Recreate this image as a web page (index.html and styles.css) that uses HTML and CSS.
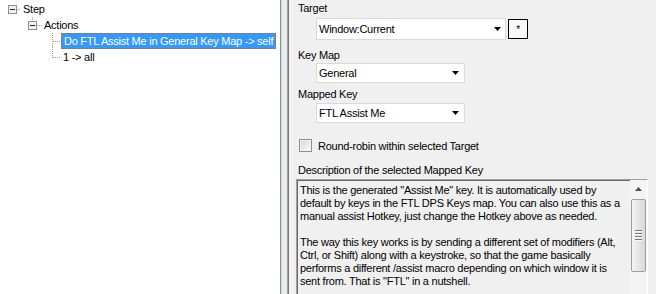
FILE: index.html
```html
<!DOCTYPE html>
<html lang="en">
<head>
    <meta charset="UTF-8">
    <title>Step Actions</title>
    <link rel="stylesheet" href="styles.css">
</head>
<body>
<div class="window">

    <div class="tree">
        <div class="row">
            <svg class="gutter" width="21" height="16">
                <rect class="box" x="8.5" y="4.5" width="8" height="8"/>
                <line class="minus" x1="10" y1="8.5" x2="15" y2="8.5"/>
                <line class="dots" x1="17" y1="8.5" x2="21" y2="8.5"/>
            </svg>
            <span class="item">Step</span>
        </div>
        <div class="row">
            <svg class="gutter" width="42" height="16">
                <line class="dots" x1="32.5" y1="0" x2="32.5" y2="4"/>
                <rect class="box" x="28.5" y="4.5" width="8" height="8"/>
                <line class="minus" x1="30" y1="8.5" x2="35" y2="8.5"/>
                <line class="dots" x1="37" y1="8.5" x2="42" y2="8.5"/>
            </svg>
            <span class="item">Actions</span>
        </div>
        <div class="row">
            <svg class="gutter" width="61" height="16">
                <line class="dots" x1="52.5" y1="0" x2="52.5" y2="16"/>
                <line class="dots" x1="53" y1="8.5" x2="61" y2="8.5"/>
            </svg>
            <span class="item selected">Do FTL Assist Me in General Key Map -&gt; self</span>
        </div>
        <div class="row">
            <svg class="gutter" width="61" height="16">
                <line class="dots" x1="52.5" y1="0" x2="52.5" y2="9"/>
                <line class="dots" x1="53" y1="8.5" x2="61" y2="8.5"/>
            </svg>
            <span class="item">1 -&gt; all</span>
        </div>
    </div>

    <div class="splitter"></div>

    <div class="panel">
        <div class="field-label">Target</div>
        <div class="combo-row">
            <div class="combo wide">
                <span>Window:Current</span>
                <svg class="arrow" width="7" height="4"><polygon points="0,0 7,0 3.5,4"/></svg>
            </div>
            <div class="star-btn">*</div>
        </div>

        <div class="field-label keymap">Key Map</div>
        <div class="combo narrow">
            <span>General</span>
            <svg class="arrow" width="7" height="4"><polygon points="0,0 7,0 3.5,4"/></svg>
        </div>

        <div class="field-label mapped">Mapped Key</div>
        <div class="combo narrow">
            <span>FTL Assist Me</span>
            <svg class="arrow" width="7" height="4"><polygon points="0,0 7,0 3.5,4"/></svg>
        </div>

        <div class="check-row">
            <span class="checkbox"></span>
            <span>Round-robin within selected Target</span>
        </div>

        <div class="field-label desc-label">Description of the selected Mapped Key</div>
        <div class="desc">
            <div class="desc-text">
                This is the generated "Assist Me" key. It is automatically used by<br>
                default by keys in the FTL DPS Keys map. You can also use this as a<br>
                manual assist Hotkey, just change the Hotkey above as needed.<br>
                <br>
                The way this key works is by sending a different set of modifiers (Alt,<br>
                Ctrl, or Shift) along with a keystroke, so that the game basically<br>
                performs a different /assist macro depending on which window it is<br>
                sent from. That is "FTL" in a nutshell.
            </div>
            <div class="scrollbar">
                <div class="sb-btn">
                    <svg width="7" height="4"><polygon points="3.5,0 7,4 0,4"/></svg>
                </div>
                <div class="sb-thumb">
                    <span></span><span></span><span></span><span></span>
                </div>
                <div class="sb-track"></div>
            </div>
        </div>
    </div>

</div>
</body>
</html>
```

FILE: styles.css
```css
body {
    margin: 0;
    font-family: "Liberation Sans", Arial, sans-serif;
    font-size: 11px;
    letter-spacing: -0.25px;
    color: #000;
    overflow: hidden;
}
.window {
    display: flex;
    width: 656px;
    height: 294px;
}

/* tree view */
.tree {
    width: 281px;
    box-sizing: border-box;
    background: #fff;
    border-right: 1px solid #8e8f94;
    padding-top: 1px;
}
.row {
    display: flex;
    align-items: center;
    height: 16px;
}
.gutter { flex: none; display: block; }
.gutter .dots {
    stroke: #a0a0a0;
    stroke-width: 1;
    stroke-dasharray: 1 1;
    shape-rendering: crispEdges;
}
.gutter .box {
    fill: #f2f2f2;
    stroke: #8e8f8f;
    stroke-width: 1;
}
.gutter .minus {
    stroke: #222;
    stroke-width: 1;
    shape-rendering: crispEdges;
}
.item {
    line-height: 16px;
    padding: 0 2px;
    white-space: nowrap;
}
.selected {
    width: 215px;
    box-sizing: border-box;
    background: #3399ff;
    color: #fff;
    border: 1px dotted #cc6600;
    line-height: 14px;
    padding-left: 2px;
    overflow: hidden;
}

.splitter {
    width: 6px;
    background: #ebecef;
    border-left: 1px solid #d4d4d8;
    box-sizing: border-box;
}

/* right side */
.panel {
    flex: 1;
    background: #f0f0f0;
    border-left: 1px solid #a0a0a0;
    box-shadow: inset 1px 0 0 #7a7a7a;
    padding: 2px 8px 0 8px;
    overflow: hidden;
}
.field-label {
    height: 13px;
    line-height: 13px;
    margin-left: 2px;
}
.keymap { margin-top: 9px; }
.mapped { margin-top: 5px; }
.desc-label { margin-top: 12px; }

.combo-row {
    display: flex;
    align-items: center;
    margin-top: 3px;
}
.combo {
    display: flex;
    align-items: center;
    justify-content: space-between;
    box-sizing: border-box;
    height: 20px;
    margin-left: 20px;
    padding: 0 5px 0 2px;
    background: #fff;
    border: 1px solid #d9d9d9;
}
.combo.wide {
    width: 190px;
    height: 22px;
    padding-right: 4px;
}
.combo.narrow {
    width: 149px;
    margin-top: 1px;
}
.mapped + .combo { margin-top: 2px; }
.arrow { display: block; fill: #000; }

.star-btn {
    width: 20px;
    height: 20px;
    box-sizing: border-box;
    margin-left: 2px;
    border: 1px solid #000;
    background: #f8f8f8;
    text-align: center;
    line-height: 20px;
    font-size: 10px;
}

.check-row {
    display: flex;
    align-items: center;
    height: 13px;
    margin-top: 16px;
    margin-left: 3px;
}
.checkbox {
    width: 13px;
    height: 13px;
    box-sizing: border-box;
    margin-right: 6px;
    border: 1px solid #8e8f8f;
    background: linear-gradient(135deg, #d6d6d6, #fbfbfb);
    box-shadow: inset 0 0 0 1px #f4f4f4;
}

.desc {
    display: flex;
    height: 130px;
    margin-top: 2px;
    background: #f0f0f0;
    border: 1px solid;
    border-color: #a0a0a0 #ffffff #ffffff #a0a0a0;
    box-shadow: inset 1px 1px 0 #696969;
}
.desc-text {
    flex: 1;
    padding: 4px 0 0 3px;
    line-height: 13px;
    white-space: nowrap;
}
.scrollbar {
    width: 17px;
    display: flex;
    flex-direction: column;
    background: #f4f4f4;
}
.sb-btn {
    height: 17px;
    display: flex;
    align-items: center;
    justify-content: center;
}
.sb-btn svg { fill: #4d4d4d; }
.sb-thumb {
    height: 73px;
    margin: 2px 1px 0 1px;
    box-sizing: border-box;
    border: 1px solid #9e9e9e;
    border-radius: 2px;
    background: linear-gradient(to right, #f4f4f4, #e6e6e6 50%, #d8d8d8);
    display: flex;
    flex-direction: column;
    align-items: center;
    justify-content: center;
    gap: 1px;
}
.sb-thumb span {
    width: 7px;
    height: 1px;
    background: #777;
    border-bottom: 1px solid #fafafa;
}
.sb-track { flex: 1; }
```
